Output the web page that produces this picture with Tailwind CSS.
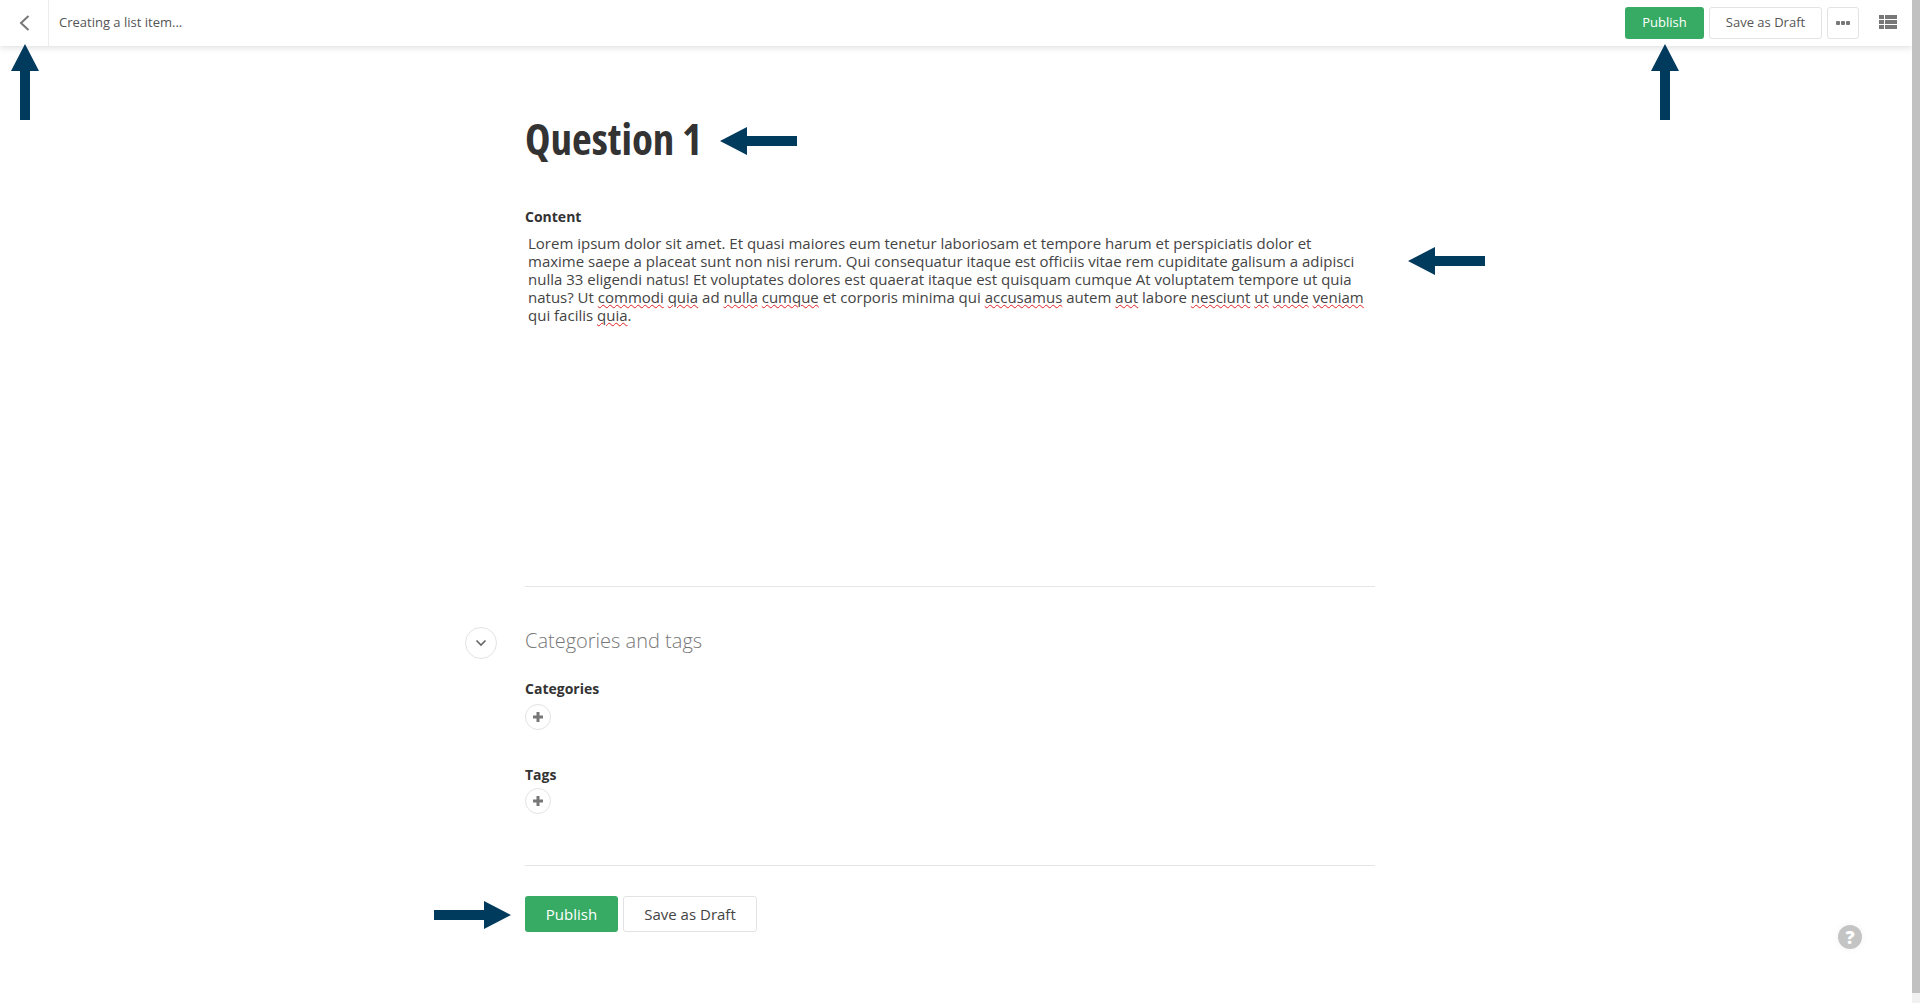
<!DOCTYPE html>
<html lang="en">
<head>
<meta charset="utf-8">
<title>Creating a list item</title>
<script src="https://cdn.jsdelivr.net/npm/@tailwindcss/browser@4"></script>
</head>
<body class="bg-white font-['Open_Sans',sans-serif] text-[#333] overflow-hidden">
<div class="relative flex h-[1003px] w-[1920px] overflow-hidden">
  <div class="w-[1912px] h-full flex flex-col">
    <header class="h-[46px] shrink-0 flex items-center bg-white shadow-[0_2px_6px_rgba(0,0,0,0.12)]">
      <div class="w-[49px] h-full border-r border-[#ececec] flex items-center justify-center">
        <svg width="12" height="16" viewBox="0 0 12 16" fill="none" stroke="#777" stroke-width="2"><path d="M10.5 1 3 8l7.5 7"/></svg>
      </div>
      <div class="ml-[10px] text-[13px] text-[#555]">Creating a list item...</div>
      <div class="ml-auto flex items-center">
        <button class="w-[79px] h-[32px] rounded-[3px] bg-[#37ab63] text-white text-[13px]">Publish</button>
        <button class="ml-[5px] w-[113px] h-[32px] rounded-[3px] border border-[#e3e3e3] bg-white text-[13px] text-[#555]">Save as Draft</button>
        <button class="ml-[5px] w-[32px] h-[32px] rounded-[3px] border border-[#e3e3e3] bg-white flex items-center justify-center">
          <svg width="14" height="4" viewBox="0 0 14 4" fill="#777"><rect width="4" height="4" rx="1"/><rect x="5" width="4" height="4" rx="1"/><rect x="10" width="4" height="4" rx="1"/></svg>
        </button>
        <svg class="ml-[20px] mr-[15px] mb-[2px]" width="18" height="14" viewBox="0 0 18 14" fill="#777"><rect width="5" height="4"/><rect x="6" width="12" height="4"/><rect y="5" width="5" height="4"/><rect x="6" y="5" width="12" height="4"/><rect y="10" width="5" height="4"/><rect x="6" y="10" width="12" height="4"/></svg>
      </div>
    </header>

    <main class="ml-[525px] w-[850px]">
      <h1 class="mt-[68px] h-[50px] leading-[50px] text-[43px] font-bold text-[#333] [font-stretch:75%] whitespace-nowrap">Question 1</h1>
      <div class="mt-[43px] text-[14px] leading-[20px] font-bold">Content</div>
      <p class="mt-[7px] pl-[3px] w-[845px] h-[352px] text-[15px] leading-[18px] text-[#444]">Lorem ipsum dolor sit amet. Et quasi maiores eum tenetur laboriosam et tempore harum et perspiciatis dolor et maxime saepe a placeat sunt non nisi rerum. Qui consequatur itaque est officiis vitae rem cupiditate galisum a adipisci nulla 33 eligendi natus! Et voluptates dolores est quaerat itaque est quisquam cumque At voluptatem tempore ut quia natus? Ut <span class="underline decoration-wavy decoration-[#e02020] decoration-1">commodi</span> <span class="underline decoration-wavy decoration-[#e02020] decoration-1">quia</span> ad <span class="underline decoration-wavy decoration-[#e02020] decoration-1">nulla</span> <span class="underline decoration-wavy decoration-[#e02020] decoration-1">cumque</span> et corporis minima qui <span class="underline decoration-wavy decoration-[#e02020] decoration-1">accusamus</span> autem <span class="underline decoration-wavy decoration-[#e02020] decoration-1">aut</span> labore <span class="underline decoration-wavy decoration-[#e02020] decoration-1">nesciunt</span> <span class="underline decoration-wavy decoration-[#e02020] decoration-1">ut</span> <span class="underline decoration-wavy decoration-[#e02020] decoration-1">unde</span> <span class="underline decoration-wavy decoration-[#e02020] decoration-1">veniam</span> qui facilis <span class="underline decoration-wavy decoration-[#e02020] decoration-1">quia</span>.</p>
      <hr class="border-t border-[#e5e5e5]">

      <section class="relative mt-[40px]">
        <button class="absolute left-[-60px] top-[0px] w-[32px] h-[32px] rounded-full border border-[#e3e3e3] bg-white flex items-center justify-center">
          <svg width="12" height="8" viewBox="0 0 12 8" fill="none" stroke="#666" stroke-width="1.6"><path d="M1.5 1.5 6 6l4.5-4.5"/></svg>
        </button>
        <h2 class="h-[28px] leading-[28px] text-[20px] font-light text-[#777]">Categories and tags</h2>
        <div class="mt-[24px] text-[14px] leading-[20px] font-bold">Categories</div>
        <button class="mt-[5px] w-[26px] h-[26px] rounded-full border border-[#e3e3e3] bg-white flex items-center justify-center">
          <svg width="12" height="12" viewBox="0 0 12 12" fill="#777"><path d="M4.5 1h3v3.5H11v3H7.5V11h-3V7.5H1v-3h3.5z"/></svg>
        </button>
        <div class="mt-[35px] text-[14px] leading-[20px] font-bold">Tags</div>
        <button class="mt-[3px] w-[26px] h-[26px] rounded-full border border-[#e3e3e3] bg-white flex items-center justify-center">
          <svg width="12" height="12" viewBox="0 0 12 12" fill="#777"><path d="M4.5 1h3v3.5H11v3H7.5V11h-3V7.5H1v-3h3.5z"/></svg>
        </button>
      </section>
      <hr class="mt-[51px] border-t border-[#e5e5e5]">
      <div class="mt-[30px] flex gap-[5px]">
        <button class="w-[93px] h-[36px] rounded-[3px] bg-[#37ab63] text-white text-[15px]">Publish</button>
        <button class="w-[134px] h-[36px] rounded-[3px] border border-[#e3e3e3] bg-white text-[15px] text-[#444]">Save as Draft</button>
      </div>
    </main>
  </div>

  <div class="w-[8px] h-full bg-[#f1f1f1]">
    <div class="h-[993px] bg-[#c1c1c1]"></div>
  </div>

  <svg class="absolute left-[11px] top-[44px]" width="28" height="76" viewBox="0 0 28 76" fill="#003a5d"><path d="M14 0 28 27H19V76H9V27H0z"/></svg>
  <svg class="absolute left-[1651px] top-[44px]" width="28" height="76" viewBox="0 0 28 76" fill="#003a5d"><path d="M14 0 28 27H19V76H9V27H0z"/></svg>
  <svg class="absolute left-[720px] top-[127px]" width="77" height="28" viewBox="0 0 77 28" fill="#003a5d"><path d="M0 14 27 0V9H77V19H27V28z"/></svg>
  <svg class="absolute left-[1408px] top-[247px]" width="77" height="28" viewBox="0 0 77 28" fill="#003a5d"><path d="M0 14 27 0V9H77V19H27V28z"/></svg>
  <svg class="absolute left-[434px] top-[901px]" width="77" height="28" viewBox="0 0 77 28" fill="#003a5d"><path d="M77 14 50 0V9H0V19H50V28z"/></svg>

  <div class="absolute left-[1838px] top-[925px] w-[24px] h-[24px] rounded-full bg-[#c4c4c4] text-white text-[18px] leading-[24px] font-extrabold text-center shadow-[0_0_8px_rgba(0,0,0,0.05)]">?</div>
</div>
</body>
</html>
